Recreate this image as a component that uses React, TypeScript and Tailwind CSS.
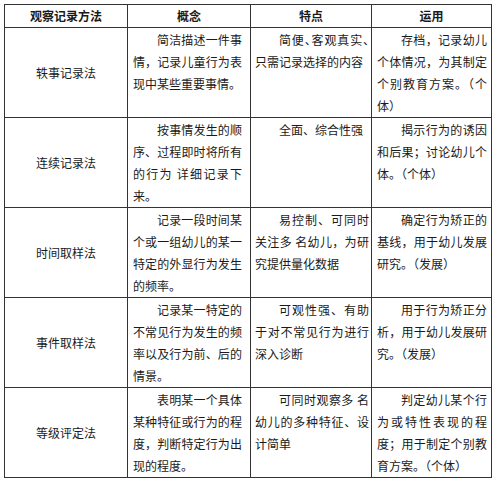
import clsx from "clsx";

type Row = {
    name: string;
    concept: string[];
    feature: string[];
    use: string[];
};

const rows: Row[] = [
    {
        name: "轶事记录法",
        concept: ["简洁描述一件事", "情，记录儿童行为表", "现中某些重要事情。"],
        feature: ["简便、客观真实、", "只需记录选择的内容"],
        use: ["存档，记录幼儿", "个体情况，为其制定", "个别教育方案。（个", "体）"],
    },
    {
        name: "连续记录法",
        concept: ["按事情发生的顺", "序、过程即时将所有", "的行为 详细记录下", "来。"],
        feature: ["全面、综合性强"],
        use: ["揭示行为的诱因", "和后果；讨论幼儿个", "体。（个体）"],
    },
    {
        name: "时间取样法",
        concept: ["记录一段时间某", "个或一组幼儿的某一", "特定的外显行为发生", "的频率。"],
        feature: ["易控制、可同时", "关注多 名幼儿，为研", "究提供量化数据"],
        use: ["确定行为矫正的", "基线，用于幼儿发展", "研究。（发展）"],
    },
    {
        name: "事件取样法",
        concept: ["记录某一特定的", "不常见行为发生的频", "率以及行为前、后的", "情景。"],
        feature: ["可观性强、有助", "于对不常见行为进行", "深入诊断"],
        use: ["用于行为矫正分", "析，用于幼儿发展研", "究。（发展）"],
    },
    {
        name: "等级评定法",
        concept: ["表明某一个具体", "某种特征或行为的程", "度，判断特定行为出", "现的程度。"],
        feature: ["可同时观察多 名", "幼儿的多种特征、设", "计简单"],
        use: ["判定幼儿某个行", "为或特性表现的程", "度；用于制定个别教", "育方案。（个体）"],
    },
];

function Lines({ lines, halt }: { lines: string[]; halt?: boolean }) {
    return (
        <>
            {lines.map((line, i) => (
                <div
                    key={i}
                    className={clsx(
                        i === 0 && "indent-[2em]",
                        i === 0 && halt && "whitespace-nowrap [font-feature-settings:'halt']",
                        i < lines.length - 1 && "text-justify [text-align-last:justify]"
                    )}
                >
                    {line}
                </div>
            ))}
        </>
    );
}

export default function App() {
    return (
        <div className="min-h-[480px] bg-white p-1 font-['Noto_Sans_CJK_SC',sans-serif] text-[12px] leading-[22px] text-[#1a1a1a]">
            <table className="table-fixed border-collapse w-[487px]">
                <colgroup>
                    <col className="w-[123px]" />
                    <col className="w-[123px]" />
                    <col className="w-[121px]" />
                    <col className="w-[120px]" />
                </colgroup>
                <thead>
                    <tr>
                        <th className="border border-[#333] p-0 font-bold text-center">观察记录方法</th>
                        <th className="border border-[#333] p-0 font-bold text-center">概念</th>
                        <th className="border border-[#333] p-0 font-bold text-center">特点</th>
                        <th className="border border-[#333] p-0 font-bold text-center">运用</th>
                    </tr>
                </thead>
                <tbody>
                    {rows.map((row, idx) => (
                        <tr key={row.name}>
                            <td className="border border-[#333] p-0 text-center align-middle">{row.name}</td>
                            <td className="border border-[#333] pt-[1px] pl-[5px] pr-[8px] align-top">
                                <Lines lines={row.concept} />
                            </td>
                            <td className="border border-[#333] pt-[1px] pl-[4px] pr-[2px] align-top">
                                <Lines lines={row.feature} halt={idx === 0} />
                            </td>
                            <td className="border border-[#333] pt-[1px] pl-[5px] pr-[4px] align-top">
                                <Lines lines={row.use} />
                            </td>
                        </tr>
                    ))}
                </tbody>
            </table>
        </div>
    );
}
